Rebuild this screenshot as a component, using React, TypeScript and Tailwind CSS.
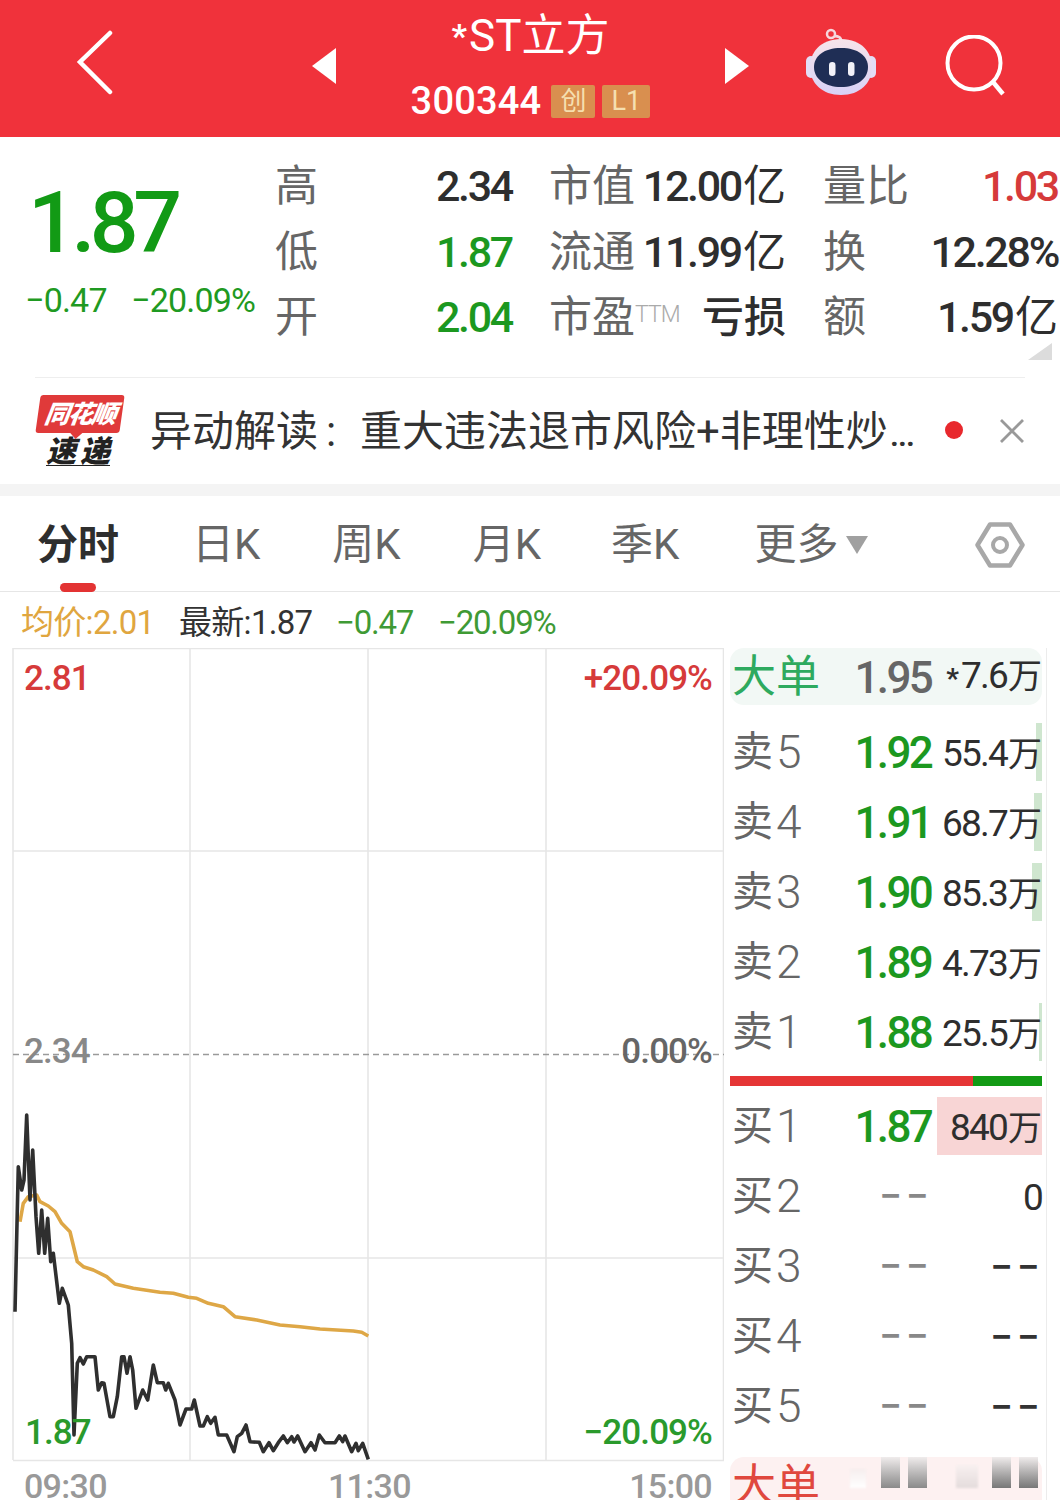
import React from "react";

const FONT = 'Roboto, "Noto Sans CJK SC", sans-serif';

const blackPts: [number, number][] = [[45,665],[55,230],[65,300],[72,270],[80,75],[90,330],[98,180],[108,380],[116,490],[125,360],[134,490],[143,385],[152,515],[160,490],[178,640],[187,595],[205,645],[215,760],[222,1035],[232,820],[240,803],[250,822],[260,800],[285,800],[295,900],[305,878],[312,880],[330,980],[340,980],[352,920],[365,800],[372,800],[381,850],[390,800],[398,840],[408,955],[428,900],[443,930],[460,825],[472,878],[490,878],[497,900],[505,880],[525,930],[540,1005],[558,957],[575,957],[583,930],[600,1008],[610,1008],[622,980],[632,1000],[645,982],[655,1035],[680,1035],[702,1085],[712,1040],[725,1030],[738,1005],[750,1055],[778,1057],[790,1085],[807,1058],[820,1082],[835,1058],[850,1038],[862,1058],[875,1040],[882,1056],[893,1038],[915,1085],[933,1058],[945,1080],[958,1035],[975,1058],[1005,1058],[1018,1038],[1028,1055],[1035,1038],[1055,1085],[1068,1060],[1075,1082],[1088,1060],[1105,1108]];
const avgPts: [number, number][] = [[60,395],[70,340],[85,320],[110,315],[120,335],[145,348],[165,365],[185,400],[210,425],[232,515],[250,530],[280,540],[320,560],[345,582],[400,595],[480,607],[520,610],[565,622],[590,625],[625,640],[670,650],[705,680],[770,690],[840,705],[900,710],[960,717],[1060,723],[1085,727],[1105,738]];
const toPath = (p: [number, number][]) => p.map(([x, y]) => `${(x / 3).toFixed(1)},${(y / 3 + 1090).toFixed(1)}`).join(" ");

function Stat({ label, value, color = "text-[#2e2e2e]", sup, cjk }: { label: string; value: string; color?: string; sup?: boolean; cjk?: boolean }) {
  const yi = value.endsWith("亿");
  return (
    <div className="flex items-center justify-between h-[65.5px]">
      <span className="text-[43px] leading-none text-[#666] whitespace-nowrap -ml-[1px]">
        {label}
        {sup && <span className="text-[23px] text-[#aaa] font-light tracking-[-1px] relative -top-[10px]">TTM</span>}
      </span>
      {cjk ? (
        <span className={`text-[42px] leading-none font-medium whitespace-nowrap ${color}`}>{value}</span>
      ) : (
        <span className={`text-[43px] leading-none font-medium tracking-[-2.3px] whitespace-nowrap ${color}`}>
          {yi ? value.slice(0, -1) : value}
          {yi && <span className="tracking-normal text-[43px] ml-[2px] font-normal">亿</span>}
        </span>
      )}
    </div>
  );
}

function Vol({ text }: { text: string }) {
  const wan = text.endsWith("万");
  return (
    <span className="text-[37px] leading-none text-[#2e2e2e] tracking-[-1.8px]">
      {wan ? text.slice(0, -1) : text}
      {wan && <span className="text-[34px] tracking-normal ml-[1px]">万</span>}
    </span>
  );
}

function BookRow({ label, digit, price, vol, bar = 0, kind }: { label: string; digit: string; price: string; vol: string; bar?: number; kind: "sell" | "buy" }) {
  return (
    <div className="relative flex items-center h-[70px] pl-[2px]">
      {bar > 0 && (
        <div
          className={`absolute right-0 top-[6px] h-[58px] ${kind === "sell" ? "bg-[#cfe6cf]" : "bg-[#f8d5d5]"}`}
          style={{ width: bar }}
        />
      )}
      <span className="relative flex items-center h-[46px] w-[100px] text-[#666] leading-none whitespace-nowrap">
        <span className="text-[41px]">{label}</span>
        <span className="text-[46px] font-light ml-[3px]">{digit}</span>
      </span>
      <span className="relative w-[100px] text-right whitespace-nowrap pr-[1px] pt-[2px]">
        {price === "--" ? (
          <span className="relative left-[2px] text-[40px] leading-none text-[#888] font-medium tracking-[4.4px]">−−</span>
        ) : (
          <span className="text-[44px] leading-none text-[#1c981f] font-medium tracking-[-2.7px]">{price}</span>
        )}
      </span>
      <span className="relative flex-1 text-right pt-[4px] whitespace-nowrap">
        {vol === "--" ? (
          <span className="relative left-[2px] text-[40px] leading-none text-[#333] font-medium tracking-[4.4px]">−−</span>
        ) : (
          <Vol text={vol} />
        )}
      </span>
    </div>
  );
}

function Robot() {
  return (
    <svg width="76" height="74" viewBox="0 0 76 74">
      <defs>
        <linearGradient id="helm" x1="0" y1="0" x2="0" y2="1">
          <stop offset="0" stopColor="#f7e4ea" />
          <stop offset="1" stopColor="#d8d2f6" />
        </linearGradient>
      </defs>
      <circle cx="27" cy="6" r="4" fill="none" stroke="#f6d6dc" strokeWidth="2.5" />
      <path d="M30 8 C35 8 37 9 37 13" stroke="#f6d6dc" strokeWidth="3" fill="none" />
      <rect x="2" y="28" width="10" height="22" rx="5" fill="#e3ddf6" />
      <rect x="62" y="28" width="10" height="22" rx="5" fill="#e3ddf6" />
      <path d="M37 11 C58 11 68 25 68 39 C68 55 56 67 37 67 C18 67 6 55 6 39 C6 25 16 11 37 11 Z" fill="url(#helm)" />
      <path d="M37 20 C54 20 64 28 64 39 C64 51 53 59 37 59 C21 59 10 51 10 39 C10 28 20 20 37 20 Z" fill="#1f2e55" />
      <rect x="25" y="34" width="6.5" height="14" rx="3.2" fill="#f2f2f8" />
      <rect x="44" y="34" width="6.5" height="14" rx="3.2" fill="#f2f2f8" />
    </svg>
  );
}

const AXIS = "absolute text-[34px] leading-[28px] h-[28px] tracking-[-0.7px] text-[#999] font-medium";
const LBL = "absolute text-[35px] leading-none font-medium tracking-[-0.9px]";

export default function App() {
  return (
    <div className="w-[1060px] h-[1500px] overflow-hidden bg-white" style={{ fontFamily: FONT }}>
      {/* header */}
      <header className="relative h-[137px] bg-[#f0323b] flex items-center text-white">
        <svg className="ml-[76px] mb-[12px]" width="38" height="66" viewBox="0 0 38 66" fill="none">
          <path d="M34 3 L4 32 L34 62" stroke="#fff" strokeWidth="4.5" strokeLinecap="round" strokeLinejoin="miter" />
        </svg>
        <svg className="ml-[198px] mb-[6px]" width="24" height="36" viewBox="0 0 24 36">
          <path d="M24 0 V36 L0 18 Z" fill="#fff" />
        </svg>
        <div className="flex-1 flex flex-col items-center h-full">
          <div className="h-[72px] flex items-center text-[44px] leading-none whitespace-nowrap">
            <span className="text-[34px] font-bold mr-[2px]">*</span>ST立方
          </div>
          <div className="flex items-center h-[58px]">
            <span className="text-[38px] leading-none font-medium tracking-[0.2px] mr-[10px]">300344</span>
            <span className="w-[44px] h-[33px] rounded-[2px] bg-[#d98f4f] text-[#f5dfb0] text-[26px] leading-none flex items-center justify-center mr-[7px]">创</span>
            <span className="w-[48px] h-[33px] rounded-[2px] bg-[#d98f4f] text-[#f5dfb0] text-[27px] leading-none flex items-center justify-center">L1</span>
          </div>
        </div>
        <svg className="mb-[6px]" width="24" height="36" viewBox="0 0 24 36">
          <path d="M0 0 V36 L24 18 Z" fill="#fff" />
        </svg>
        <div className="ml-[55px] mb-[7px]">
          <Robot />
        </div>
        <svg className="ml-[65px] mr-[53px] mb-[5px]" width="62" height="62" viewBox="0 0 62 62" fill="none">
          <circle cx="29" cy="28" r="26.5" stroke="#fff" strokeWidth="4" />
          <path d="M48 47 L58 59" stroke="#fff" strokeWidth="4.5" />
        </svg>
      </header>

      {/* stats */}
      <section className="relative h-[240px] flex">
        <div className="w-[276px] shrink-0">
          <div className="pl-[28px] pt-[43px] h-[141px] text-[#129a15] text-[86px] leading-none font-medium tracking-[-5.5px] whitespace-nowrap">1.87</div>
          <div className="flex text-[#1f9a22] text-[34px] leading-none tracking-[-0.8px] whitespace-nowrap pl-[25px] mt-[5px]">
            <span className="w-[106px]">−0.47</span>
            <span>−20.09%</span>
          </div>
        </div>
        <div className="grid grid-cols-[236px_236px_234px] gap-x-[38px] pt-[17px] h-[213px] shrink-0">
          <Stat label="高" value="2.34" />
          <Stat label="市值" value="12.00亿" />
          <Stat label="量比" value="1.03" color="text-[#d63a3a]" />
          <Stat label="低" value="1.87" color="text-[#1c981f]" />
          <Stat label="流通" value="11.99亿" />
          <Stat label="换" value="12.28%" />
          <Stat label="开" value="2.04" color="text-[#1c981f]" />
          <Stat label="市盈" sup value="亏损" cjk />
          <Stat label="额" value="1.59亿" />
        </div>
        <svg className="absolute left-[1028px] top-[206px]" width="25" height="18" viewBox="0 0 25 18">
          <path d="M24 0 V17 H0 Z" fill="#dcdcdc" />
        </svg>
      </section>

      {/* alert */}
      <section className="h-[107px] mx-[35px] border-t border-[#eeeeee] flex items-center relative">
        <div className="w-[115px] shrink-0 -mt-[2px]">
          <div className="relative w-[84px] h-[38px] ml-[3px] bg-[#e03a3a] rounded-[3px] -skew-x-[8deg] flex items-center justify-center">
            <span className="text-white text-[25px] leading-none font-black italic whitespace-nowrap tracking-[-1.5px]">同花顺</span>
            <div className="absolute left-[36px] bottom-[-4px] w-[10px] h-[10px] bg-[#e03a3a] rotate-45" />
          </div>
          <div className="mt-[5px] ml-[11px] w-[64px] border-b-[1.5px] border-[#222] text-[#222] text-[30px] leading-[27px] font-black italic tracking-[4px] whitespace-nowrap">速递</div>
        </div>
        <div className="flex items-baseline pt-[2px] text-[42px] leading-none text-[#333] whitespace-nowrap w-[768px]">
          异动解读<span className="inline-block w-[42px] pl-[8px]">:</span>重大违法退市风险+非理性炒
          <span className="text-[34px] font-medium tracking-[-1.5px] ml-[2px]">...</span>
        </div>
        <span className="absolute left-[910px] top-[43px] w-[18px] h-[18px] rounded-full bg-[#e8282d]" />
        <svg className="absolute left-[965px] top-[41px]" width="24" height="24" viewBox="0 0 24 24" fill="none">
          <path d="M1 1 L23 23 M23 1 L1 23" stroke="#999" strokeWidth="2.8" />
        </svg>
      </section>
      <div className="h-[12px] bg-[#f4f4f4]" />

      {/* tabs */}
      <nav className="relative h-[96px] border-b border-[#e6e6e6] flex items-center pl-[37px] pt-[3px] text-[42px] leading-none text-[#666] whitespace-nowrap">
        <span className="font-bold text-[41px] text-[#2e2e2e]">分时</span>
        <span className="ml-[73px]">日K</span>
        <span className="ml-[72px]">周K</span>
        <span className="ml-[72px]">月K</span>
        <span className="ml-[70px]">季K</span>
        <span className="ml-[75px]">更多</span>
        <svg className="ml-[8px]" width="22" height="18" viewBox="0 0 22 18">
          <path d="M0 0 H22 L11 18 Z" fill="#a0a0a0" />
        </svg>
        <svg className="absolute left-[975px] top-[26px]" width="50" height="46" viewBox="0 0 50 46" fill="none">
          <path d="M15 2.5 H35 L47.5 23 L35 43.5 H15 L2.5 23 Z" stroke="#a8a8a8" strokeWidth="4.5" strokeLinejoin="round" />
          <circle cx="25" cy="23" r="7" stroke="#a8a8a8" strokeWidth="4" />
        </svg>
        <div className="absolute left-[60px] bottom-[-1px] w-[36px] h-[9px] rounded-full bg-[#e33333]" />
      </nav>

      {/* legend */}
      <div className="h-[56px] flex items-center pl-[21px] pt-[4px] text-[33px] leading-none tracking-[-0.7px] whitespace-nowrap">
        <span className="text-[#e0a63f] w-[158px]">均价:2.01</span>
        <span className="text-[#333] w-[157px]">最新:1.87</span>
        <span className="text-[#3f9a35] w-[102px] tracking-[-1.2px]">−0.47</span>
        <span className="text-[#3f9a35] tracking-[-1.2px]">−20.09%</span>
      </div>

      {/* chart + book */}
      <div className="flex pl-[12px]">
        <div className="relative w-[712px] h-[852px] shrink-0">
          <svg className="absolute left-0 top-0" width="712" height="852" viewBox="12 648 712 852" fill="none">
            <g stroke="#e6e6e6" strokeWidth="1.6">
              <path d="M13 648 V1460 M190 648 V1460 M368 648 V1460 M546 648 V1460 M723.5 648 V1460" />
              <path d="M13 648.5 H724 M13 851 H724 M13 1258 H724 M13 1460.5 H724" />
            </g>
            <path d="M13 1054.5 H724" stroke="#9a9a9a" strokeWidth="1.6" strokeDasharray="6 4" />
            <polyline points={toPath(avgPts)} stroke="#dea746" strokeWidth="3.6" strokeLinejoin="round" />
            <polyline points={toPath(blackPts)} stroke="#2f2f2f" strokeWidth="3.6" strokeLinejoin="round" />
          </svg>
          <span className={`${LBL} left-[12px] top-[13px] text-[#d63a3a]`}>2.81</span>
          <span className={`${LBL} right-[12px] top-[13px] text-[#d63a3a]`}>+20.09%</span>
          <span className={`${LBL} left-[12px] top-[386px] text-[#888]`}>2.34</span>
          <span className={`${LBL} right-[12px] top-[386px] text-[#666]`}>0.00%</span>
          <span className={`${LBL} left-[13px] top-[767px] text-[#2a9a2c]`}>1.87</span>
          <span className={`${LBL} right-[12px] top-[767px] text-[#2a9a2c]`}>−20.09%</span>
          <span className={`${AXIS} left-[12px] top-[824px]`}>09:30</span>
          <span className={`${AXIS} left-[316px] top-[824px]`}>11:30</span>
          <span className={`${AXIS} right-[12px] top-[824px]`}>15:00</span>
        </div>

        <div className="w-[323px] border-r border-[#ececec] pl-[6px] pr-[4px] shrink-0">
          <div className="h-[57px] rounded-[14px] bg-[#f2f8f5] flex items-center pl-[2px]">
            <span className="text-[44px] leading-none text-[#2eaa5f] w-[100px] whitespace-nowrap">大单</span>
            <span className="w-[100px] text-right pr-[1px] pt-[2px] text-[44px] leading-none text-[#666] font-medium tracking-[-2.7px]">1.95</span>
            <span className="flex-1 text-right pt-[4px] whitespace-nowrap">
              <span className="text-[28px] font-bold text-[#2e2e2e] mr-[2px]">*</span>
              <Vol text="7.6万" />
            </span>
          </div>
          <div className="mt-[12px]">
            <BookRow kind="sell" label="卖" digit="5" price="1.92" vol="55.4万" bar={6} />
            <BookRow kind="sell" label="卖" digit="4" price="1.91" vol="68.7万" bar={8} />
            <BookRow kind="sell" label="卖" digit="3" price="1.90" vol="85.3万" bar={10} />
            <BookRow kind="sell" label="卖" digit="2" price="1.89" vol="4.73万" />
            <BookRow kind="sell" label="卖" digit="1" price="1.88" vol="25.5万" bar={3} />
          </div>
          <div className="flex h-[10px] mt-[9px] mb-[5px]">
            <div className="w-[243px] bg-[#e53535]" />
            <div className="flex-1 bg-[#129a15]" />
          </div>
          <BookRow kind="buy" label="买" digit="1" price="1.87" vol="840万" bar={105} />
          <BookRow kind="buy" label="买" digit="2" price="--" vol="0" />
          <BookRow kind="buy" label="买" digit="3" price="--" vol="--" />
          <BookRow kind="buy" label="买" digit="4" price="--" vol="--" />
          <BookRow kind="buy" label="买" digit="5" price="--" vol="--" />
          <div className="relative h-[57px] mt-[16px] rounded-[14px] bg-[#fdf1f1] flex items-center pl-[2px]">
            <span className="text-[44px] leading-none text-[#e0483e] whitespace-nowrap">大单</span>
            <div className="absolute left-[120px] top-[12px] w-[16px] h-[19px] bg-gradient-to-b from-[#f6eeee] to-[#fff] blur-[1px]" />
            <div className="absolute left-[151px] top-0 w-[19px] h-[31px] bg-gradient-to-b from-[#f0ecec] to-[#8a8a8a] blur-[0.5px]" />
            <div className="absolute left-[178px] top-0 w-[19px] h-[31px] bg-gradient-to-b from-[#f0ecec] to-[#8a8a8a] blur-[0.5px]" />
            <div className="absolute left-[226px] top-[8px] w-[22px] h-[23px] bg-gradient-to-b from-[#f8f0f0] to-[#e4dcdc] blur-[1px]" />
            <div className="absolute left-[262px] top-0 w-[19px] h-[31px] bg-gradient-to-b from-[#f0ecec] to-[#777] blur-[0.5px]" />
            <div className="absolute left-[289px] top-0 w-[19px] h-[31px] bg-gradient-to-b from-[#f0ecec] to-[#777] blur-[0.5px]" />
          </div>
        </div>
      </div>
    </div>
  );
}
